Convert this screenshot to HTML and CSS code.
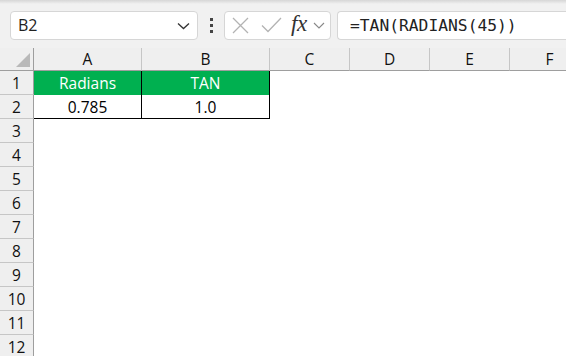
FILE: index.html
```html
<!DOCTYPE html>
<html lang="en">
    <head>
        <meta charset="UTF-8" />
        <title>TAN sheet</title>
        <link rel="stylesheet" href="styles.css">
    </head>
    <body>
        <header class="toolbar">
            <div class="name-box">
                <span>B2</span>
                <svg class="chev" width="13" height="8" viewBox="0 0 13 8">
                    <path d="M1 1.5 L6.5 6.5 L12 1.5" fill="none" stroke="#333" stroke-width="1.3" />
                </svg>
            </div>
            <div class="dots"><i></i><i></i><i></i></div>
            <div class="fx-box">
                <svg width="17" height="17" viewBox="0 0 17 17">
                    <path d="M1 1 L16 16 M16 1 L1 16" stroke="#b3b3b3" stroke-width="1.3" fill="none" />
                </svg>
                <svg width="21" height="16" viewBox="0 0 21 16">
                    <path d="M1 8.5 L7 14.5 L20 1" stroke="#b3b3b3" stroke-width="1.3" fill="none" />
                </svg>
                <span class="fx">fx</span>
                <svg width="12" height="7" viewBox="0 0 12 7">
                    <path d="M1 1 L6 6 L11 1" fill="none" stroke="#888" stroke-width="1.1" />
                </svg>
            </div>
            <div class="formula">=TAN(RADIANS(45))</div>
        </header>

        <main class="sheet">
            <div class="corner"><span class="tri"></span></div>
            <div class="col-head">A</div>
            <div class="col-head">B</div>
            <div class="col-head">C</div>
            <div class="col-head">D</div>
            <div class="col-head">E</div>
            <div class="col-head last">F</div>

            <div class="row-head">1</div>
            <div class="cell green">Radians</div>
            <div class="cell green edge">TAN</div>
            <div class="blank"></div>

            <div class="row-head">2</div>
            <div class="cell data">0.785</div>
            <div class="cell data edge">1.0</div>
            <div class="blank"></div>

            <div class="row-head">3</div><div class="blank"></div>
            <div class="row-head">4</div><div class="blank"></div>
            <div class="row-head">5</div><div class="blank"></div>
            <div class="row-head">6</div><div class="blank"></div>
            <div class="row-head">7</div><div class="blank"></div>
            <div class="row-head">8</div><div class="blank"></div>
            <div class="row-head">9</div><div class="blank"></div>
            <div class="row-head">10</div><div class="blank"></div>
            <div class="row-head">11</div><div class="blank"></div>
            <div class="row-head">12</div><div class="blank"></div>
        </main>
    </body>
</html>
```

FILE: styles.css
```css
* {
    margin: 0;
    padding: 0;
    box-sizing: border-box;
}

html {
    font-family: "Open Sans", "Noto Sans", sans-serif;
}

body {
    width: 566px;
    height: 356px;
    overflow: hidden;
    background: #ffffff;
    color: #000;
}

.toolbar {
    height: 48px;
    display: flex;
    align-items: center;
    padding: 2px 0 0 10px;
    background: linear-gradient(#d6d6d6, #f1f1f1 4px, #f1f1f1);
}

.name-box {
    width: 188px;
    height: 29px;
    display: flex;
    align-items: center;
    justify-content: space-between;
    padding: 0 7px 0 7px;
    background: #fff;
    border: 1px solid #d6d6d6;
    border-radius: 4px;
    font-size: 16px;
    color: #222;
}

.chev {
    margin-top: 1px;
}

.dots {
    width: 26px;
    display: flex;
    flex-direction: column;
    align-items: center;
    gap: 3px;
}

.dots i {
    width: 3px;
    height: 3px;
    background: #444;
}

.fx-box {
    width: 107px;
    height: 29px;
    display: flex;
    align-items: center;
    gap: 0;
    padding-left: 7px;
    background: #fff;
    border: 1px solid #d6d6d6;
    border-radius: 4px;
}

.fx-box svg:nth-child(2) {
    margin-left: 12px;
}

.fx {
    margin-left: 9px;
    font-family: "Liberation Serif", serif;
    font-style: italic;
    font-size: 23px;
    color: #333;
    letter-spacing: -0.5px;
    line-height: 1;
    margin-top: -3px;
}

.fx-box svg:last-child {
    margin-left: 6px;
}

.formula {
    flex: 1;
    height: 29px;
    margin-left: 6px;
    padding-left: 12px;
    display: flex;
    align-items: center;
    background: #fff;
    border: 1px solid #d6d6d6;
    border-right: none;
    border-radius: 4px 0 0 4px;
    font-family: "DejaVu Sans Mono", monospace;
    font-size: 16.3px;
    color: #222;
}

.sheet {
    display: grid;
    grid-template-columns: 34px 108px 128px 80px 80px 80px 80px;
    grid-template-rows: 23px repeat(12, 24px);
    width: 590px;
    font-size: 15.5px;
}

.corner {
    position: relative;
    background: #efefef;
    border-right: 1px solid #9e9e9e;
    border-bottom: 1px solid #9e9e9e;
}

.tri {
    position: absolute;
    right: 3px;
    bottom: 3px;
    width: 0;
    height: 0;
    border-left: 14px solid transparent;
    border-bottom: 14px solid #b9b9b9;
}

.col-head {
    display: flex;
    align-items: center;
    justify-content: center;
    background: #efefef;
    border-right: 1px solid #c6c6c6;
    border-bottom: 1px solid #9e9e9e;
    color: #111;
}

.row-head {
    grid-column: 1;
    display: flex;
    align-items: center;
    justify-content: center;
    background: #efefef;
    border-right: 1px solid #9e9e9e;
    border-bottom: 1px solid #c6c6c6;
    color: #111;
}

.blank {
    grid-column: 2 / -1;
}

.cell.green + .blank,
.cell.data + .blank {
    grid-column: 4 / -1;
}

.cell {
    display: flex;
    align-items: center;
    justify-content: center;
    border-right: 1px solid #000;
}

.cell.green {
    background: #00b050;
    color: #fff;
}

.cell.data {
    border-bottom: 1px solid #000;
}
```
